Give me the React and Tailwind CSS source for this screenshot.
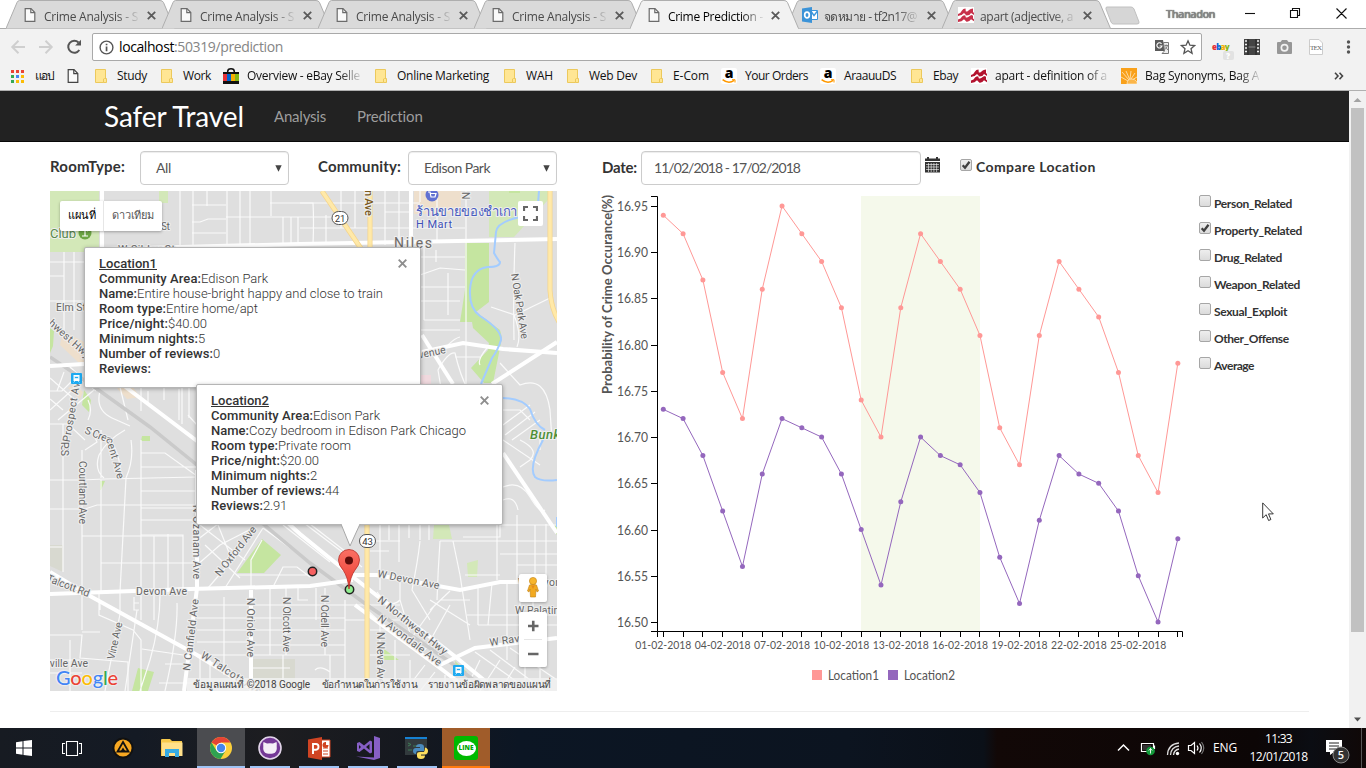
import { useLayoutEffect, useRef } from "react";

/* Text whose tracking is computed so that it fills the width w. */
function Fit({ w, className = "", children }) {
  const ref = useRef(null);
  useLayoutEffect(() => {
    const el = ref.current;
    el.style.letterSpacing = "0px";
    const base = el.getBoundingClientRect().width;
    el.style.letterSpacing = "1px";
    const step = el.getBoundingClientRect().width - base;
    if (step > 0) el.style.letterSpacing = (w - base) / step + "px";
  }, [w, children]);
  return (
    <span ref={ref} className={"inline-block shrink-0 whitespace-nowrap " + className}>
      {children}
    </span>
  );
}

/* ---------- browser icons ---------- */
function DocIcon({ color = "#6b6b6b" }) {
  return (
    <svg width="16" height="16" viewBox="0 0 16 16" fill="none" stroke={color} strokeWidth="1.2">
      <path d="M3.2 1.7H9L12.8 5.5V14.3H3.2Z" fill="#fafafa" />
      <path d="M8.8 1.7V5.7H12.8" />
    </svg>
  );
}

function OutlookIcon() {
  return (
    <svg width="16" height="16" viewBox="0 0 16 16">
      <path d="M9 3.5H15.5V12.5H9Z" fill="#fff" stroke="#3b97dc" />
      <path d="M9.5 5 12 8.5 15.5 4" fill="none" stroke="#3b97dc" strokeWidth="1.4" />
      <path d="M0 1.5 10 0V16L0 14.5Z" fill="#3b93d8" />
      <ellipse cx="5" cy="8" rx="2.3" ry="2.9" fill="none" stroke="#fff" strokeWidth="1.7" />
    </svg>
  );
}

function WaveIcon({ color = "#c8304a" }) {
  return (
    <svg width="16" height="16" viewBox="0 0 16 16">
      <path d="M0 0H16V16H0Z" fill="#fff" />
      <g fill={color}>
        <path d="M0 7Q3 6 4 3.500 5 1.500 7.500 1.500L7.800 4.500Q9.500 5 11 3 12.500 1.500 15 1.500L15 5 16 6V8L13 6Q11.500 8.800 8.500 8.500L6 6Q4 8.800 0 9Z" />
        <path d="M0 12.500Q3 11.800 4 9.500 5 8 7.500 8L7.800 10.500Q9.500 11 11 9.300 12.500 8 15 8L15 11.500 16 12.300V14.300L13 12.300Q11.500 15 8.500 14.700L6 12.300Q4 14.800 0 15Z" />
      </g>
      <path d="M1 9.600Q4.500 9 6 7.300L8.300 9.500Q11.500 9.800 13 7.200L15.500 8.800" fill="none" stroke="#fff" strokeWidth=".7" />
    </svg>
  );
}

function Folder() {
  return (
    <svg width="12" height="14" viewBox="0 0 12 14">
      <path d="M.5.5H10.5V10.5H8.5V13.5H.5Z" fill="#ffe694" stroke="#ecc95c" />
      <path d="M8.5 10V13.5H11.5V9.5H9.5Z" fill="#ffe694" stroke="#ecc95c" />
    </svg>
  );
}

function EbayBag() {
  return (
    <svg width="16" height="16" viewBox="0 0 16 16">
      <path d="M4.7 5V3.4Q4.7.8 8 .8T11.3 3.4V5" fill="none" stroke="#111" strokeWidth="1.5" />
      <path d="M0 4H16V16H0Z" fill="#111" />
      <path d="M0 6H4V13H0Z" fill="#e53238" />
      <path d="M4 6H8V13H4Z" fill="#0064d2" />
      <path d="M8 6H12V13H8Z" fill="#f5af02" />
      <path d="M12 6H16V13H12Z" fill="#86b817" />
    </svg>
  );
}

function AmazonIcon() {
  return (
    <span className="flex h-4 w-4 flex-col items-center rounded-[2px] bg-white">
      <span className="h-[11px] font-['Open_Sans',sans-serif] text-[14px] leading-[9px] font-extrabold text-black">a</span>
      <svg width="14" height="5" viewBox="0 0 14 5" fill="none" stroke="#f90" strokeWidth="1.4">
        <path d="M.6.6Q6.5 5.5 12.2 1.4" />
        <path d="M10 .7H13V3.5" strokeWidth="1" />
      </svg>
    </span>
  );
}

function SunIcon() {
  return (
    <svg width="16" height="16" viewBox="0 0 16 16">
      <path d="M0 0H16V16H0Z" fill="#f9a11b" />
      <path d="M8 12 1 4M8.500 11 5 3M9 11 10 3M10 11 14 5M11 12 16 9M7 13 0 9" stroke="#ffe9c4" strokeWidth=".8" />
      <path d="M6 16Q6 11 11 11 14 11 16 14V16Z" fill="#fbb549" stroke="#ffe9c4" strokeWidth=".7" />
    </svg>
  );
}

const TABS = [
  { t: "Crime Analysis - S", w: 94 },
  { t: "Crime Analysis - S", w: 94 },
  { t: "Crime Analysis - S", w: 94 },
  { t: "Crime Analysis - S", w: 94 },
  { t: "Crime Prediction -", w: 95, active: true },
  { t: "จดหมาย - tf2n17@", w: 93, icon: <OutlookIcon /> },
  { t: "apart (adjective, a", w: 93, icon: <WaveIcon /> },
];

function Tab({ tab }) {
  return (
    <div className={"relative flex h-[28px] w-[156px] shrink-0 items-center pt-[2px] pl-4 " + (tab.active ? "z-10" : "")}>
      <svg className="absolute top-0 left-0 -z-10" width="170" height="30" viewBox="0 0 170 30">
        <path
          d="M0 28.5 11 2.5Q12 .5 13.500 .5H154Q156.500 .5 157.500 2.5L168.500 28.5"
          fill={tab.active ? "#f2f2f2" : "#dadada"}
          stroke="#aeaeae"
        />
        {tab.active && <path d="M1 28H168V30H1Z" fill="#f2f2f2" />}
      </svg>
      {tab.icon || <DocIcon />}
      <span className="ml-1.5 w-[97px] overflow-hidden [mask-image:linear-gradient(to_right,black_75%,transparent_100%)]">
        <Fit w={tab.w} className={"text-[12px] leading-4 " + (tab.active ? "text-black" : "text-[#4a4a4a]")}>
          {tab.t}
        </Fit>
      </span>
      <svg className="ml-[6px]" width="9" height="9" viewBox="0 0 9 9" stroke="#5a5a5a" strokeWidth="1.8">
        <path d="M.8.8 8.2 8.2M8.2.8.8 8.2" />
      </svg>
    </div>
  );
}

function TabStrip() {
  return (
    <div className="relative z-0 flex h-[28px] bg-white pl-1.5">
      {TABS.map((t, i) => (
        <div key={i} className={"relative " + (t.active ? "z-10" : "z-0")}>
          <Tab tab={t} />
        </div>
      ))}
      <svg className="mt-[6px] ml-[7px]" width="36" height="19" viewBox="0 0 36 19">
        <path d="M2 1H26Q28 1 29 3L34 16Q34.500 18 32 18H8.500Q7 18 6 16L1 3Q.5 1 2 1Z" fill="#d6d6d6" stroke="#c0c0c0" />
      </svg>
      <div className="flex flex-1 items-start">
        <Fit w={49} className="mt-[7px] ml-[25px] text-[11px] leading-[14px] font-semibold text-[#8a8a8a] [text-shadow:0_0_1px_#333]">
          Thanadon
        </Fit>
        <svg className="mt-[8px] ml-[30px]" width="104" height="11" viewBox="0 0 104 11" fill="none" stroke="#111" strokeWidth="1.1">
          <path d="M0 5.5H10" />
          <path d="M45.5 2.5H52.5V9.5H45.5ZM47.5 2.5V.5H54.5V7.5H52.5M91.5.5 101.5 10.5M101.5.5 91.5 10.5" />
        </svg>
      </div>
    </div>
  );
}

function AddressBar() {
  return (
    <div className="flex h-[34px] items-center border-t border-[#acacac] bg-[#f2f2f2] pt-[3px] pl-[10px]">
      <svg width="74" height="18" viewBox="0 0 74 18" fill="none" strokeWidth="2" className="mr-2">
        <path d="M15 9H2.5M8.5 2.8 2.3 9 8.5 15.2" stroke="#cfcfcf" />
        <path d="M29 9H41.5M35.5 2.8 41.7 9 35.5 15.2" stroke="#cfcfcf" />
        <path d="M69.3 12A6 6 0 1 1 68.5 4.5" stroke="#555" />
        <path d="M71 1.8V7.6H65.2Z" fill="#555" />
      </svg>
      <div className="flex h-[28px] w-[1110px] items-center rounded-[2px] border border-[#a9a9a9] bg-white pl-[6px]">
        <svg width="15" height="15" viewBox="0 0 15 15" className="mr-[5px]">
          <circle cx="7.5" cy="7.5" r="6.4" fill="none" stroke="#555" strokeWidth="1.4" />
          <path d="M6.7 6.5H8.4V11.2H6.7ZM6.7 3.7H8.4V5.3H6.7Z" fill="#555" />
        </svg>
        <Fit w={55} className="text-[14px] leading-5 text-black">localhost</Fit>
        <Fit w={109} className="text-[14px] leading-5 text-[#858585]">:50319/prediction</Fit>
        <svg width="42" height="16" viewBox="0 0 42 16" className="ml-auto mr-[5px]">
          <path d="M1 1H9L11 12H1Z" fill="#5a5a5a" />
          <path d="M9.5 3.5H14.5V14.5H8L10.5 12Z" fill="#eee" stroke="#777" />
          <path d="M7.5 4.8A2.6 2.6 0 1 0 8 7H5.6" stroke="#fff" fill="none" strokeWidth="1.1" />
          <path d="M10.5 6.5H14M12.2 5.5V6.5M13.5 6.5Q13 9 10.8 10.5M11.3 7.5 13.8 11" stroke="#777" fill="none" strokeWidth=".9" />
          <path
            d="M34 1.8 35.9 6.2 40.6 6.6 37 9.7 38.1 14.3 34 11.8 29.9 14.3 31 9.7 27.4 6.6 32.1 6.2Z"
            fill="none"
            stroke="#555"
            strokeWidth="1.3"
          />
        </svg>
      </div>
      <div className="flex flex-1 items-center">
        <span className="relative ml-[10px] flex h-5 w-[22px] items-center text-[8px] leading-none font-extrabold tracking-[-0.8px]">
          <span className="text-[#e53238]">e</span>
          <span className="text-[#0064d2]">b</span>
          <span className="text-[#f5af02]">a</span>
          <span className="text-[#86b817]">y</span>
          <span className="absolute top-[14px] left-[11px] h-[9px] w-[11px] rounded-[2px] bg-[#e2e2e2] pl-[3px] text-[8px] leading-[9px] text-white">?</span>
        </span>
        <svg width="112" height="18" viewBox="0 0 112 18" className="ml-[10px]">
          <path d="M0 1H16V17H0Z" fill="#444" />
          <path d="M4 1V17M12 1V17" stroke="#222" />
          <path d="M1 3H3M1 6.5H3M1 10H3M1 13.5H3M13 3H15M13 6.5H15M13 10H15M13 13.5H15" stroke="#eee" strokeWidth="1.7" />
          <path d="M4.5 9H11.5" stroke="#888" />
          <path d="M34 4H36.5L38 2H43L44.5 4H47Q48 4 48 5V15Q48 16 47 16H34Q33 16 33 15V5Q33 4 34 4Z" fill="#979797" />
          <circle cx="40.5" cy="9.8" r="4" fill="#f2f2f2" />
          <circle cx="40.5" cy="9.8" r="2.3" fill="#979797" />
          <path d="M65.5 1.5H75L78.5 5V16.5H65.5Z" fill="#fff" stroke="#ccc" />
          <text x="66" y="12" fontSize="7" fontFamily="Liberation Serif" fill="#666" textLength="12">TEX</text>
          <circle cx="104.5" cy="4" r="1.7" fill="#555" />
          <circle cx="104.5" cy="9" r="1.7" fill="#555" />
          <circle cx="104.5" cy="14" r="1.7" fill="#555" />
        </svg>
      </div>
    </div>
  );
}

/* gap: space before the icon; pad: space between icon and text */
const BOOKMARKS = [
  { gap: "ml-[95px]", pad: "ml-[10px]", i: <Folder />, t: "Study", w: 30 },
  { gap: "ml-[14px]", pad: "ml-[10px]", i: <Folder />, t: "Work", w: 28 },
  { gap: "ml-[12px]", pad: "ml-2", i: <EbayBag />, t: "Overview - eBay Selle", w: 113, fade: true },
  { gap: "ml-[15px]", pad: "ml-[10px]", i: <Folder />, t: "Online Marketing", w: 92 },
  { gap: "ml-[15px]", pad: "ml-[10px]", i: <Folder />, t: "WAH", w: 27 },
  { gap: "ml-[14px]", pad: "ml-[10px]", i: <Folder />, t: "Web Dev", w: 48 },
  { gap: "ml-[14px]", pad: "ml-[10px]", i: <Folder />, t: "E-Com", w: 36 },
  { gap: "ml-[12px]", pad: "ml-2", i: <AmazonIcon />, t: "Your Orders", w: 63 },
  { gap: "ml-[12px]", pad: "ml-2", i: <AmazonIcon />, t: "AraauuDS", w: 52 },
  { gap: "ml-[15px]", pad: "ml-[10px]", i: <Folder />, t: "Ebay", w: 25 },
  { gap: "ml-[13px]", pad: "ml-2", i: <WaveIcon color="#b3122e" />, t: "apart - definition of a", w: 112, fade: true },
  { gap: "ml-[14px]", pad: "ml-2", i: <SunIcon />, t: "Bag Synonyms, Bag A", w: 114, fade: true },
];

const APP_DOTS = ["#ea4335", "#ea4335", "#ea4335", "#34a853", "#4285f4", "#fbbc05", "#34a853", "#fbbc05", "#fbbc05"];

function BookmarksBar() {
  return (
    <div className="flex h-[29px] items-center border-b border-[#b0b0b0] bg-[#f2f2f2] text-[12px] leading-4 text-[#111]">
      <span className="ml-[11px] grid w-[13px] shrink-0 grid-cols-3 gap-[2px]">
        {APP_DOTS.map((c, i) => (
          <svg key={i} width="3" height="3"><rect width="3" height="3" fill={c} /></svg>
        ))}
      </span>
      <Fit w={18} className="ml-[11px]">แอป</Fit>
      <span className="ml-[12px] -mr-[81px]"><DocIcon color="#444" /></span>
      {BOOKMARKS.map((b) => (
        <span key={b.t} className={"flex shrink-0 items-center " + b.gap}>
          {b.i}
          <span className={b.pad + (b.fade ? " [mask-image:linear-gradient(to_right,black_82%,transparent_103%)]" : "")}>
            <Fit w={b.w}>{b.t}</Fit>
          </span>
        </span>
      ))}
      <svg className="mr-[22px] ml-auto shrink-0" width="10" height="8" viewBox="0 0 10 8" fill="none" stroke="#444" strokeWidth="1.6">
        <path d="M1 .7 4 4 1 7.3M5.5.7 8.5 4 5.5 7.3" />
      </svg>
    </div>
  );
}

/* ---------- page ---------- */
function NavBar() {
  return (
    <nav className="flex h-[51px] items-center border-b border-[#080808] bg-[#222] pl-[104px]">
      <Fit w={140} className="text-[28px] leading-[50px] text-white">Safer Travel</Fit>
      <Fit w={52} className="ml-[30px] text-[15px] leading-[50px] text-[#9d9d9d]">Analysis</Fit>
      <Fit w={66} className="ml-[31px] text-[15px] leading-[50px] text-[#9d9d9d]">Prediction</Fit>
    </nav>
  );
}

function Select({ w, children }) {
  return (
    <div className="flex h-[34px] w-[149px] items-center justify-between rounded border border-[#ccc] bg-white pr-[6px] pl-[15px] shadow-[inset_0_1px_1px_rgba(0,0,0,0.075)]">
      <Fit w={w} className="text-[14px] leading-5 text-[#555]">{children}</Fit>
      <svg width="7" height="7" viewBox="0 0 7 7"><path d="M.3.3H6.7L3.5 6.8Z" fill="#444" /></svg>
    </div>
  );
}

function CheckBox({ on }) {
  return (
    <svg width="13" height="13" viewBox="0 0 13 13" className="shrink-0">
      <defs>
        <linearGradient id="cb" x1="0" y1="0" x2="0" y2="1">
          <stop offset="0" stopColor="#efefef" />
          <stop offset="1" stopColor="#dadada" />
        </linearGradient>
      </defs>
      <rect x=".5" y=".5" width="11" height="11" rx="1.5" fill="url(#cb)" stroke="#a6a6a6" />
      {on && <path d="M2.700 6.200 5 8.700 9.500 2.800" fill="none" stroke="#3f3f3f" strokeWidth="2.3" />}
    </svg>
  );
}

function CalendarGlyph() {
  return (
    <svg width="15" height="16" viewBox="0 0 15 16" className="mb-1 ml-1">
      <path d="M0 1.5H2V0H4V1.5H11V0H13V1.5H15V4H0ZM0 5H15V15.5H0Z" fill="#333" />
      <path d="M1 7.5H14M1 10H14M1 12.5H14M3.5 6V15M6.2 6V15M8.9 6V15M11.6 6V15" stroke="#fff" strokeWidth=".6" />
    </svg>
  );
}

function Filters() {
  return (
    <div className="flex h-[49px] items-start pt-[9px] pl-[50px] font-bold text-[#333]">
      <Fit w={75} className="mt-[5px] mr-[15px] text-[15px] leading-5">RoomType:</Fit>
      <div className="font-normal"><Select w={15}>All</Select></div>
      <Fit w={83} className="mt-[5px] mr-[7px] ml-[29px] text-[15px] leading-5">Community:</Fit>
      <div className="font-normal"><Select w={66}>Edison Park</Select></div>
      <Fit w={35} className="mt-[6px] mr-1 ml-[45px] text-[15px] leading-5">Date:</Fit>
      <div className="flex h-[34px] w-[280px] items-center rounded border border-[#ccc] bg-white pl-3 font-normal shadow-[inset_0_1px_1px_rgba(0,0,0,0.075)]">
        <Fit w={146} className="text-[14px] leading-5 text-[#555]">11/02/2018 - 17/02/2018</Fit>
      </div>
      <div className="mt-[6px]"><CalendarGlyph /></div>
      <div className="mt-[8px] ml-5"><CheckBox on /></div>
      <Fit w={120} className="mt-[6px] ml-[3px] text-[14px] leading-5">Compare Location</Fit>
    </div>
  );
}

const MINOR_ROADS = [
  "M180 191V247M193 191V247M207 191V206M192 205H226M192 222H200L208 219H226M192 233H226M227 191V247M240 191V247M250 191V247M270 203H420M271 191V216M283 217V245M291 217V245M298 217V245M226 217H340",
  "M300 203H313Q314 220 313 245M326 215V245M341 191V228M300 228H410M355 191V228M385 191V245M399 191V245M385 212H410M385 228H410M420 191V202M466 191V440M410 228H465M424 243V320M436 250V262M448 273V315M420 257H465M420 287H465M420 301H460M437 191V243M515 243Q513 290 514 340M491 307 515 315 550 298M514 315Q522 335 517 347",
  "M50 262H84M64 252V330M74 252V330M50 301H84M57 310H84M50 276H64",
  "M50 391H62L80 373M50 410 92 372M58 420 100 385M50 378 75 400M70 367 96 391M64 372 57 391M50 399 63 410M88 400Q93 410 88 420M100 391Q95 410 112 418L130 426M120 387 128 420M141 388V411M148 391V402M164 387V400M179 389V420M182 387V424M189 387V418M50 424H68L85 440M63 424V560M63 545V572M82 450V630M50 480H82L104 479 197 477M50 509H85L97 505H197M82 536H183M50 547H62M50 635H82L80 658 128 662V691",
  "M101 430V478M101 480V592M104 478Q94 470 99 455 107 440 125 430M131 440Q134 460 126 478L120 592M109 440Q120 450 121 478M141 440V620M141 453H165L197 476M141 467H197M141 491H197M141 508H197M141 520H197M141 535H183V590M154 536V620M168 534V594M101 563H197M85 450 97 442 92 430M188 415 197 425M63 440V452",
  "M99 592V615L133 630 141 640V691M120 592V614L105 691M134 597V610H139M134 603H139M137 610 125 691M160 595Q160 625 150 660L140 691M177 603Q178 635 165 691M142 649 190 656M82 632H100M165 664H182M159 683H205M100 610V600M50 660H80M70 640V691M50 673H82",
  "M197 540 235 511M197 565 220 545 255 527M208 588 245 545M225 588 263 528M205 545 240 578M200 525 245 560M236 575H310M224 597V675M251 588V560L262 540M197 605H330M197 618H251M197 630H251M197 642H251M197 655H345M251 605H400M251 618H345M251 630H345M251 645H345M270 588V655M286 588V655M298 588V600H308M310 577 297 567 283 567 273 587M263 528 300 555M325 588V655M316 588V620M345 600V691M345 620H367M330 655V691M200 655V691M252 668H290M210 660V680M283 655V691M315 670Q320 665 330 672V691M218 525 232 560",
  "M300 520 362 567M283 525 330 562M310 524 350 555M380 525V590M389 524V540M399 524V562M409 524V538M420 524V540M429 524V540M440 541H500M370 541H400M370 551H389M420 541Q418 560 412 590L430 620M440 541Q438 570 437 600M453 541 460 575 470 640M463 537H500V525H557M497 524V580M517 515V582M535 525V582M546 524V582M500 541H557M500 554H557M517 565H557M478 585V625M492 583 488 625M507 583V660M465 575H500M440 600H470M435 605 410 640M450 605 425 650M430 600 470 625M467 615H557M478 625H557M520 600V640M533 600V640M450 591 430 610M400 577V600L412 640M377 592Q390 610 400 600M380 620H400M367 610 400 640",
  "M370 630H405M370 655H410M380 620V691M395 640V691M410 660V691M425 665 405 691M435 672 420 691M445 675V691M475 652 530 691M490 650 545 691M510 648 557 680M480 660 465 691M500 660 480 691M515 667 500 691M540 640V691M525 640V680",
  "M443 400 438 370Q448 352 455 353 460 375 468 390M455 357H480M448 345Q455 338 460 337M487 348Q477 360 480 365M503 410H520L530 420M503 425 530 405M505 435 535 412M512 440 540 420M500 363 520 385Q545 375 550 410L552 440M520 440Q540 450 530 460L520 467M540 430V450M503 487Q520 480 530 497T545 510M503 500Q515 495 518 510",
  "M503 440 540 465M420 330H460M424 320H460M420 275 440 268 465 270",
];

const MAJOR_ROADS = [
  "M100 249 300 244 557 239", "M102 191V249", "M411 191V246", "M50 366 84 364",
  "M84 355 115 379 197 441 300 534 353 577 457 658 495 689",
  "M50 594 190 589 310 586 353 580", "M353 575H377L460 590 500 582H557",
  "M50 572 90 596 197 655 255 691", "M197 470V588L184 691", "M251 590V691",
  "M503 453 557 533", "M422 335 453 384", "M422 352 463 343 503 349 557 353", "M492 384 557 342",
  "M440 665 475 648 557 638", "M355 605 440 668 470 691",
];

/* text, x, y, rotation, length, colour, size */
const LABELS = [
  ["Club", 50, 238, 0, 26, "#578b4b", 13],
  ["W Sibley St", 118, 253, 0, 57],
  ["St", 161, 230, 0, 9],
  ["Elm St", 56, 311, 0, 30],
  ["hwest Hwy", 48, 324, 42, 52],
  ["S Prospect Ave", 68, 452, -80, 76],
  ["S Cres", 84, 433, 22, 28],
  ["cent Ave", 106, 439, 74, 42],
  ["Courtland Ave", 79, 461, 90, 63],
  ["P S", 61, 442, 90, 14],
  ["N Ozanam Ave", 193, 505, 90, 74],
  ["N Oxford Ave", 220, 577, -52, 60],
  ["Devon Ave", 136, 595, 0, 51],
  ["Talcott Rd", 46, 581, 21, 45],
  ["Vine Ave", 114, 660, -77, 38],
  ["nville Ave", 44, 667, 0, 44],
  ["N Canfield Ave", 190, 671, -83, 72],
  ["W Talcott Ave", 200, 657, 33, 70],
  ["N Oriole Ave", 247, 598, 90, 59],
  ["N Olcott Ave", 283, 597, 90, 55],
  ["N Odell Ave", 321, 595, 90, 52],
  ["W Devon Ave", 377, 577, 11, 63],
  ["N Northwest Hwy", 377, 601, 39, 86],
  ["N Avondale Ave", 377, 620, 37, 77],
  ["N Neva Ave", 377, 632, 90, 52],
  ["W Rav", 490, 646, -8, 30],
  ["W Palatine", 515, 614, 0, 50],
  ["W Devon", 518, 586, 0, 43],
  ["Avenue", 413, 360, -12, 34],
  ["N Oak Park Ave", 511, 274, 81, 66],
  ["N", 462, 192, 90, 8],
];

function MapDrawing() {
  return (
    <svg width="507" height="500" viewBox="50 191 507 500" className="block" fontFamily="Roboto, sans-serif">
      <rect x="50" y="191" width="507" height="500" fill="#dfdfdf" />
      <g fill="#d3e8b8">
        <path d="M50 191H99V252H50Z" />
        <path d="M489 191H548V200L514 237H489Z" />
        <path d="M159 191H168V203H159Z" />
        <path d="M434 525H449L452 539H433ZM467 563 478 560 477 577 468 577Z" />
      </g>
      <g fill="#c5e5a0">
        <path d="M465 243H489V302L476 312 500 330 502 338 493 383H484L471 368 488 350 489 343 473 328 472 322H460L465 290Z" />
        <path d="M50 328 54 331 53 346 50 353ZM84 390 91 400 89 412 82 405Z" />
        <path d="M262 539 281 555 264 573 237 573Z" />
        <path d="M138 668 154 672 148 691H132ZM100 481H105L101 490 100 490ZM384 649 399 660H383ZM455 661 467 672 457 676Z" />
        <path d="M285 665H292V678H285ZM553 528 557 523V535ZM142 436H150V441H141ZM509 191H520V193H509Z" />
      </g>
      <g fill="#eedfcc">
        <path d="M63 331 84 342V362H78L60 345ZM414 191H461V214H414ZM115 386H132L140 397 127 399ZM75 385 83 392 80 399 68 388Z" />
      </g>
      <path d="M50 545H63V572L50 566ZM253 659H295V691H253Z" fill="#d8d9d0" />
      <path d="M421 375H431V384H421Z" fill="#f0d9de" />
      <g fill="none" stroke="#fafafa" strokeWidth="1.2">
        {MINOR_ROADS.map((d, i) => <path key={i} d={d} />)}
      </g>
      <path d="M50 357 100 391 150 427 197 465 250 513 310 563 367 605 450 662 488 691" fill="none" stroke="#cacaca" strokeWidth="3.5" />
      <g fill="none" stroke="#fff" strokeWidth="4">
        {MAJOR_ROADS.map((d, i) => <path key={i} d={d} />)}
      </g>
      <g fill="none" stroke="#f5d58c" strokeWidth="5">
        <path d="M322 191 362 250M370 191V250M550 191V290Q551 308 559 322M367 524V691" />
      </g>
      <g fill="none" stroke="#ffe9a8" strokeWidth="3.5">
        <path d="M322 191 362 250M370 191V250M550 191V290Q551 308 559 322M367 524V691" />
      </g>
      <g fill="none" stroke="#a3ccff" strokeWidth="2">
        <path d="M539 191 538 204Q536 211 520 217 497 222 496 232L494 253Q498 260 500 262 500 267 488 267 471 269 470 290 469 308 480 316 502 330 501 340 498 350 492 358L481 384" />
        <path d="M502 398Q522 398 530 409 535 425 545 430" />
        <path d="M543 440Q528 467 535 477 541 482 557 480M557 517V527" />
      </g>

      <g stroke="#eee" strokeWidth="2.2" paintOrder="stroke" strokeLinejoin="round">
        {LABELS.map(([t, x, y, r, w, c, s], i) => (
          <text key={i} transform={"translate(" + x + " " + y + ") rotate(" + r + ")"} textLength={w} fontSize={s || 10.5} fill={c || "#666"}>
            {t}
          </text>
        ))}
        <text x="394" y="248" fontSize="14" fill="#6e6a66" textLength="38">Niles</text>
        <text transform="translate(365 190) rotate(90)" fontSize="11" fontWeight="500" fill="#7a5a1e" textLength="26">n Ave</text>
        <text x="416" y="216" fontSize="13" fontWeight="500" fill="#4a5cc0" textLength="101">ร้านขายของชำเกา</text>
        <text x="416" y="228" fontSize="11" fill="#3f51b8" textLength="36">H Mart</text>
        <text x="530" y="439" fontSize="13" fontWeight="500" fontStyle="italic" fill="#4d8f36" textLength="30">Bunk</text>
      </g>
      <circle cx="85" cy="233" r="6.5" fill="#6da544" />
      <path d="M85 229V236M85 229 88 231M82 236H88" stroke="#fff" strokeWidth="1.2" fill="none" />
      <circle cx="432" cy="195" r="6.5" fill="#6070d2" />
      <path d="M428 192H430L431 197H435L436 193.5H430.5" stroke="#fff" strokeWidth="1.2" fill="none" />
      {[[340, 218, "21"], [367.5, 541, "43"]].map(([x, y, n]) => (
        <g key={n}>
          <rect x={x - 8} y={y - 6.5} width="16" height="13" rx="6.5" fill="#fff" stroke="#555" />
          <text x={x} y={y + 3.5} fontSize="9.5" textAnchor="middle" fill="#333">{n}</text>
        </g>
      ))}
      {[[76.5, 378.5], [458.5, 670.5]].map(([x, y]) => (
        <g key={x}>
          <rect x={x - 5.5} y={y - 5.5} width="11" height="11" rx="1" fill="#1eaaf1" />
          <path d={"M" + (x - 3) + " " + (y - 3.5) + "h6v6h-6z"} fill="#fff" />
          <path d={"M" + (x - 2) + " " + (y - 2) + "h4v2h-4zM" + (x - 3) + " " + (y + 4) + "l1.5-1.5M" + (x + 3) + " " + (y + 4) + "l-1.5-1.5"} fill="#1eaaf1" stroke="#fff" strokeWidth=".6" />
        </g>
      ))}

      <circle cx="312.5" cy="571.5" r="4.2" fill="#f66060" stroke="#222" strokeWidth="1.5" />
      <circle cx="349.5" cy="589.5" r="4.2" fill="#8fee8f" stroke="#222" strokeWidth="1.5" />
      <defs>
        <linearGradient id="pin" x1="0" y1="0" x2="0" y2="1">
          <stop offset="0" stopColor="#fb7064" />
          <stop offset="1" stopColor="#ea3b30" />
        </linearGradient>
      </defs>
      <path d="M349 589Q348 577 343 570 338.5 565 338.5 560A10.5 10.5 0 0 1 359.5 560Q359.5 565 355 570 350 577 349 589Z" fill="url(#pin)" stroke="#b8302a" strokeWidth=".8" />
      <circle cx="349" cy="560.5" r="4" fill="#5c0c0a" />
    </svg>
  );
}

const INFO1 = [
  ["Community Area:", 102, "Edison Park", 67],
  ["Name:", 38, "Entire house-bright happy and close to train", 246],
  ["Room type:", 67, "Entire home/apt", 92],
  ["Price/night:", 69, "$40.00", 39],
  ["Minimum nights:", 99, "5", 7],
  ["Number of reviews:", 114, "0", 7],
  ["Reviews:", 52, "", 0],
];
const INFO2 = [
  ["Community Area:", 102, "Edison Park", 67],
  ["Name:", 38, "Cozy bedroom in Edison Park Chicago", 217],
  ["Room type:", 67, "Private room", 73],
  ["Price/night:", 69, "$20.00", 39],
  ["Minimum nights:", 99, "2", 7],
  ["Number of reviews:", 114, "44", 14],
  ["Reviews:", 52, "2.91", 24],
];

function InfoWindow({ title, rows, place }) {
  return (
    <div className={"absolute rounded-[2px] border border-[#b5b5b5] bg-white pt-[8px] pl-[14px] text-[13px] leading-[15px] text-[#333] shadow-[0_1px_4px_rgba(0,0,0,0.3)] " + place}>
      <svg className="absolute top-[11px] right-[13px]" width="9" height="9" viewBox="0 0 9 9" stroke="#8e8e8e" strokeWidth="1.9">
        <path d="M.7.7 8.3 8.3M8.3.7.7 8.3" />
      </svg>
      <div className="flex h-[15px]"><Fit w={58} className="font-medium underline">{title}</Fit></div>
      {rows.map(([k, kw, v, vw]) => (
        <div key={k} className="flex h-[15px]">
          <Fit w={kw} className="font-medium">{k}</Fit>
          {v && <Fit w={vw} className="font-light">{v}</Fit>}
        </div>
      ))}
    </div>
  );
}

function MapPanel() {
  return (
    <div className="relative h-[500px] w-[507px] overflow-hidden font-['Roboto',sans-serif]">
      <MapDrawing />
      <div className="absolute top-[10px] left-[10px] flex h-[30px] items-center rounded-[2px] bg-white text-[11px] shadow-[0_1px_3px_rgba(0,0,0,0.3)]">
        <span className="flex h-full w-[44px] items-center justify-center border-r border-[#e6e6e6] font-medium text-black"><Fit w={28}>แผนที่</Fit></span>
        <span className="flex w-[58px] justify-center text-[#565656]"><Fit w={42}>ดาวเทียม</Fit></span>
      </div>
      <div className="absolute top-[10px] left-[468px] flex h-[25px] w-[25px] items-center justify-center rounded-[2px] bg-white">
        <svg width="15" height="15" viewBox="0 0 15 15" fill="none" stroke="#666" strokeWidth="2.2">
          <path d="M1 5V1H5M10 1H14V5M14 10V14H10M5 14H1V10" />
        </svg>
      </div>
      <InfoWindow title="Location1" rows={INFO1} place="top-[56px] left-[34px] h-[141px] w-[337px]" />
      <InfoWindow title="Location2" rows={INFO2} place="top-[193px] left-[146px] h-[141px] w-[307px]" />
      <svg className="absolute top-[331px] left-[288px]" width="26" height="27" viewBox="0 0 26 27">
        <path d="M3 0V2L12 24 22 2V0Z" fill="#fff" />
        <path d="M3 2 12 24 22 2" fill="none" stroke="#a8a8a8" />
      </svg>
      <div className="absolute top-[383px] left-[469px] flex h-[28px] w-[28px] items-center justify-center rounded-[2px] bg-white shadow-[0_1px_3px_rgba(0,0,0,0.3)]">
        <svg width="14" height="22" viewBox="0 0 14 22">
          <path d="M3.5 8Q7 6.5 10.5 8L12.5 14 11 15 10 12 9.5 20H4.5L4 12 3 15 1.5 14Z" fill="#f2a91f" stroke="#c07f12" strokeWidth=".6" />
          <circle cx="7" cy="4" r="3.6" fill="#f7b52c" stroke="#c07f12" strokeWidth=".6" />
          <path d="M5.2 8.5 7 12 8.8 8.5" fill="#e58a1c" />
        </svg>
      </div>
      <div className="absolute top-[421px] left-[469px] flex h-[55px] w-[28px] flex-col items-center rounded-[2px] bg-white shadow-[0_1px_3px_rgba(0,0,0,0.3)]">
        <svg width="28" height="55" viewBox="0 0 28 55" stroke="#666" strokeWidth="2.6">
          <path d="M9 14H19.5M14.250 8.700V19.200M9 42H19.5" />
          <path d="M5 27.5H23" stroke="#e6e6e6" strokeWidth="1" />
        </svg>
      </div>
      <div className="absolute top-[474px] left-[6px] flex text-[20px] leading-6 [text-shadow:0_0_2px_#fff,0_0_2px_#fff]">
        <Fit w={62} className="font-['Lato',sans-serif] font-medium">
          <span className="text-[#4285f4]">G</span>
          <span className="text-[#ea4335]">o</span>
          <span className="text-[#fbbc05]">o</span>
          <span className="text-[#4285f4]">g</span>
          <span className="text-[#34a853]">l</span>
          <span className="text-[#ea4335]">e</span>
        </Fit>
      </div>
      <div className="absolute right-0 bottom-0 flex h-[13px] items-center bg-[#f2f2f2]/80 px-[6px] text-[10px] leading-[13px] text-[#444]">
        <Fit w={117}>ข้อมูลแผนที่ ©2018 Google</Fit>
        <Fit w={95} className="ml-[12px]">ข้อกำหนดในการใช้งาน</Fit>
        <Fit w={123} className="ml-[11px]">รายงานข้อผิดพลาดของแผนที่</Fit>
      </div>
    </div>
  );
}

/* ---------- chart ---------- */
const LOC1 = [16.94, 16.92, 16.87, 16.77, 16.72, 16.86, 16.95, 16.92, 16.89, 16.84, 16.74, 16.7, 16.84, 16.92, 16.89, 16.86, 16.81, 16.71, 16.67, 16.81, 16.89, 16.86, 16.83, 16.77, 16.68, 16.64, 16.78];
const LOC2 = [16.73, 16.72, 16.68, 16.62, 16.56, 16.66, 16.72, 16.71, 16.7, 16.66, 16.6, 16.54, 16.63, 16.7, 16.68, 16.67, 16.64, 16.57, 16.52, 16.61, 16.68, 16.66, 16.65, 16.62, 16.55, 16.5, 16.59];
const X_LABELS = ["01", "04", "07", "10", "13", "16", "19", "22", "25"];
const px = (i) => 663.3 + i * 19.79;
const py = (v) => 622 - (v - 16.5) * 924.5;

function Series({ data, color }) {
  return (
    <g>
      <polyline points={data.map((v, i) => px(i) + "," + py(v)).join(" ")} fill="none" stroke={color} strokeWidth="1" />
      {data.map((v, i) => <circle key={i} cx={px(i)} cy={py(v)} r="2.5" fill={color} />)}
    </g>
  );
}

function Chart() {
  return (
    <svg width="600" height="500" viewBox="595 191 600 500" className="ml-[38px] shrink-0" fontFamily="Lato, sans-serif" fill="#555">
      <rect x="861" y="196" width="119" height="435" fill="#f5f9eb" />
      <path d="M651 196.5H657.5V631.5H651M657.5 637V631.5H1182.5V637" fill="none" stroke="#000" strokeWidth="1" />
      {Array.from({ length: 10 }, (_, i) => {
        const v = 16.5 + i * 0.05;
        const y = Math.round(py(v)) + 0.5;
        return (
          <g key={i}>
            <path d={"M651 " + y + "H657"} stroke="#000" />
            <text x="617" y={y + 4} fontSize="13" textLength="31" lengthAdjust="spacingAndGlyphs">{v.toFixed(2)}</text>
          </g>
        );
      })}
      {LOC1.map((_, i) => <path key={i} d={"M" + (Math.round(px(i) - 0.5) + 0.5) + " 632V637"} stroke="#000" />)}
      {X_LABELS.map((d, i) => (
        <text key={d} x={px(i * 3) - 28} y="649" fontSize="11.5" textLength="56" lengthAdjust="spacingAndGlyphs">{d + "-02-2018"}</text>
      ))}
      <text transform="translate(612 394) rotate(-90)" fontSize="13" fontWeight="700" textLength="199">Probability of Crime Occurance(%)</text>
      <Series data={LOC1} color="#ff9896" />
      <Series data={LOC2} color="#9467bd" />
      <rect x="812" y="670" width="10" height="10" fill="#ff9896" />
      <text x="828" y="680" fontSize="12.5" textLength="51" lengthAdjust="spacingAndGlyphs">Location1</text>
      <rect x="888" y="670" width="10" height="10" fill="#9467bd" />
      <text x="904" y="680" fontSize="12.5" textLength="51" lengthAdjust="spacingAndGlyphs">Location2</text>
    </svg>
  );
}

const CRIMES = [
  ["Person_Related", 78], ["Property_Related", 88, true], ["Drug_Related", 68], ["Weapon_Related", 86],
  ["Sexual_Exploit", 73], ["Other_Offense", 74], ["Average", 40],
];

function CrimeList() {
  return (
    <div className="relative ml-1 flex-1 pt-1">
      {CRIMES.map(([t, w, on]) => (
        <div key={t} className="flex h-[27px] items-start">
          <CheckBox on={on} />
          <Fit w={w} className="mt-px ml-[2px] text-[12px] leading-4 font-bold text-[#333]">{t}</Fit>
        </div>
      ))}
      <svg className="absolute top-[311px] left-[63px]" width="13" height="20" viewBox="0 0 13 20">
        <path d="M.7.9V16L4.2 12.7 6.6 18.5 8.9 17.5 6.5 11.9H11.3Z" fill="#fff" stroke="#222" strokeWidth=".9" />
      </svg>
    </div>
  );
}

function ScrollBar() {
  return (
    <div className="flex w-[17px] flex-col items-center bg-[#f1f1f1]">
      <svg width="17" height="17"><path d="M4.5 11 8.5 7 12.5 11Z" fill="#a3a3a3" /></svg>
      <div className="h-[524px] w-[13px] bg-[#c1c1c1]" />
      <svg className="mt-auto" width="17" height="17"><path d="M5 6.5H12L8.5 10.5Z" fill="#505050" /></svg>
    </div>
  );
}

/* ---------- taskbar ---------- */
function TaskItem({ box = "w-[49px]", line = "bg-[#9fc3f5]", lineW = "w-10", children }) {
  return (
    <div className={"flex h-10 shrink-0 flex-col items-center " + box}>
      <div className="flex h-[38px] items-center pt-[2px]">{children}</div>
      <div className={"h-[2px] " + lineW + " " + line} />
    </div>
  );
}

function Taskbar() {
  return (
    <div className="flex h-10 bg-[linear-gradient(90deg,#171b22_0,#141a24_10%,#1d1d20_20%,#15181f_30%,#0c1624_38%,#0c1420_62%,#0b1018_72%,#120807_73%,#0c0606_92%,#0b0d13_96%,#100807_100%)] font-['Open_Sans',sans-serif] text-white">
      <TaskItem box="w-[48px]" line="bg-transparent">
        <svg width="16" height="16" viewBox="0 0 16 16" fill="#fff">
          <path d="M0 2.2 6.5 1.3V7.5H0ZM7.5 1.1 16 0V7.5H7.5ZM0 8.5H6.5V14.7L0 13.8ZM7.5 8.5H16V16L7.5 14.9Z" />
        </svg>
      </TaskItem>
      <TaskItem box="w-[48px]" line="bg-transparent">
        <svg width="20" height="15" viewBox="0 0 20 15" fill="none" stroke="#fff" strokeWidth="1.1">
          <path d="M4.5.5H15.5V14.5H4.5ZM3 2.5H.5V12.5H3M17 2.5H19.5V12.5H17" />
        </svg>
      </TaskItem>
      <TaskItem box="w-[54px]" line="bg-transparent">
        <svg width="22" height="22" viewBox="0 0 22 22">
          <circle cx="11" cy="11" r="10.5" fill="#111" />
          <circle cx="11" cy="11" r="8.6" fill="#f8a822" />
          <path d="M11 5 16.500 14.500H5.500Z" fill="none" stroke="#111" strokeWidth="1.800" />
          <path d="M11 10.500 13.500 14.500H8.500Z" fill="#111" />
        </svg>
      </TaskItem>
      <TaskItem box="w-[44px]" line="bg-transparent">
        <svg width="22" height="18" viewBox="0 0 22 18">
          <path d="M0 1Q0 0 1 0H9L11 2H21V17H0Z" fill="#f7c94b" />
          <path d="M1 3.5H21.5V17H1Z" fill="#ffe08a" />
          <path d="M4 10H18V18H14V14H8V18H4Z" fill="#36abe4" />
        </svg>
      </TaskItem>
      <div className="ml-[3px] bg-[#4b4c50]">
        <TaskItem box="w-[48px]" lineW="w-12">
          <svg width="22" height="22" viewBox="0 0 22 22">
            <circle cx="11" cy="11" r="11" fill="#fbcf3b" />
            <path d="M11 11 1.5 5.5A11 11 0 0 1 20.5 5.5H11Z" fill="#e54335" />
            <path d="M1.5 5.5A11 11 0 0 0 10.5 22L15.5 13.8 11 11 6.5 13.7Z" fill="#2fa251" />
            <circle cx="11" cy="11" r="5.2" fill="#fff" />
            <circle cx="11" cy="11" r="4.2" fill="#4486ee" />
          </svg>
        </TaskItem>
      </div>
      <TaskItem box="w-[50px]">
        <svg width="24" height="24" viewBox="0 0 24 24">
          <circle cx="12" cy="12" r="11" fill="#743896" stroke="#e2d5ea" strokeWidth="1.6" />
          <path d="M5.5 6 9 7.5Q12 7 15 7.5L18.5 6Q19 8 18.7 10 19.5 16.5 15 17.5 12 18.2 9 17.5 4.5 16.5 5.3 10 5 8 5.5 6Z" fill="#f4eef7" />
        </svg>
      </TaskItem>
      <TaskItem box="w-[48px]">
        <svg width="23" height="23" viewBox="0 0 23 23">
          <path d="M11 3H22V20H11Z" fill="#fff" stroke="#d04423" />
          <path d="M15 11H20M15 14H20M15 17H20" stroke="#d04423" />
          <path d="M18 5A3 3 0 1 0 20.5 8H18Z" fill="#d04423" />
          <path d="M0 2.5 14 0V23L0 20.5Z" fill="#d04423" />
          <path d="M5 17V7H8Q10.5 7 10.5 9.8T8 12.7H5" fill="none" stroke="#fff" strokeWidth="1.9" />
        </svg>
      </TaskItem>
      <TaskItem box="w-[50px]">
        <svg width="24" height="24" viewBox="0 0 24 24" fill="#865fc5">
          <path d="M18 0 24 2V22L18 24 0 20.5 18 21.5ZM1 7 3.5 6 8 9.5 14 4.5 16 5.5V16.5L14 17.5 8 12.5 3.5 16 1 15ZM3 9V13L5 11ZM13.5 8 10 11 13.5 14Z" fillRule="evenodd" />
        </svg>
      </TaskItem>
      <TaskItem box="w-[48px]">
        <svg width="24" height="24" viewBox="0 0 24 24">
          <path d="M0 2H22V19H0Z" fill="#323a3d" />
          <path d="M0 1H22V3H0Z" fill="#1681d3" />
          <path d="M3 7 6 8.5 3 10M8 10H12M3 14H7" stroke="#3e7d57" fill="none" />
          <path d="M15 8Q19 8 19 11V15H13Q11 15 11 18 8 18 8 15 8 12 11 12H15V11H11Q11 8 15 8Z" fill="#4b8bbe" />
          <path d="M20 11.5Q23 12 23 15T20 18.5H16V19.5H20Q20 23 16 23T12 20V18Q12 16 15 16H19Q20 15 20 11.5Z" fill="#ffe05e" />
        </svg>
      </TaskItem>
      <div className="ml-px bg-[#a05c2a]">
        <TaskItem box="w-[48px]" lineW="w-12" line="bg-[#ff7a0e]">
          <span className="flex h-6 w-6 items-center justify-center rounded-[3px] bg-[#00b900]">
            <span className="flex h-[15px] w-[19px] items-center justify-center rounded-[50%] bg-white text-[6.5px] leading-none font-extrabold text-[#00a800]">LINE</span>
          </span>
        </TaskItem>
      </div>
      <div className="mr-[2px] ml-auto flex items-center">
        <svg width="88" height="20" viewBox="0 0 88 20" fill="none" stroke="#fff" strokeWidth="1.2">
          <path d="M1 12.5 6.5 7 12 12.5" strokeWidth="1.5" />
          <path d="M24.5 5.5H36.5V13.5H24.5ZM37.5 7.5V11" />
          <path d="M26 7H34V12H26Z" fill="#333" stroke="none" />
          <circle cx="33.5" cy="13" r="4.3" fill="#129a3a" stroke="none" />
          <path d="M33.5 10.5V15.5M31.8 12.5 33.5 10.5 35.2 12.5" strokeWidth=".9" />
          <path d="M50.5 17Q51 6 62 5M53.5 17Q54 9 62 8M56.5 17Q57 12 62 11" strokeWidth="1.3" stroke="#ddd" />
          <circle cx="60.5" cy="15.5" r="1.7" fill="#fff" stroke="none" />
          <path d="M71.5 7.5H74L77.5 4.5V15.5L74 12.5H71.5Z" />
          <path d="M80 7.5Q82 10 80 12.5M82.5 5.5Q86 10 82.5 14.5" />
          <path d="M84.5 4Q89 10 84.5 16" stroke="#777" />
        </svg>
        <Fit w={24} className="ml-[8px] text-[12px] leading-4">ENG</Fit>
        <div className="-mt-[1px] ml-[12px] flex w-[59px] flex-col items-center text-[12px] leading-[18px]">
          <Fit w={27}>11:33</Fit>
          <Fit w={58}>12/01/2018</Fit>
        </div>
        <svg className="ml-[16px]" width="40" height="40" viewBox="0 0 40 40">
          <path d="M2 12H18V24H10L6 27V24H2Z" fill="#fff" />
          <path d="M5 15H15M5 18H15M5 21H12" stroke="#222" />
          <circle cx="17" cy="27" r="8" fill="#333" stroke="#888" />
          <text x="17" y="31" fontSize="11" fontWeight="600" textAnchor="middle" fill="#fff">5</text>
          <path d="M37.5 0V40" stroke="#555" />
        </svg>
      </div>
    </div>
  );
}

export default function App() {
  return (
    <div className="flex h-[768px] w-[1366px] flex-col overflow-hidden bg-white">
      <div className="font-['Open_Sans','Noto_Sans',sans-serif]">
        <TabStrip />
        <AddressBar />
        <BookmarksBar />
      </div>
      <div className="flex h-[637px]">
        <main className="w-[1349px] font-['Lato',sans-serif]">
          <NavBar />
          <Filters />
          <div className="flex pl-[50px]">
            <MapPanel />
            <Chart />
            <CrimeList />
          </div>
          <hr className="mt-5 mr-10 ml-[50px] border-[#eee]" />
        </main>
        <ScrollBar />
      </div>
      <Taskbar />
    </div>
  );
}
